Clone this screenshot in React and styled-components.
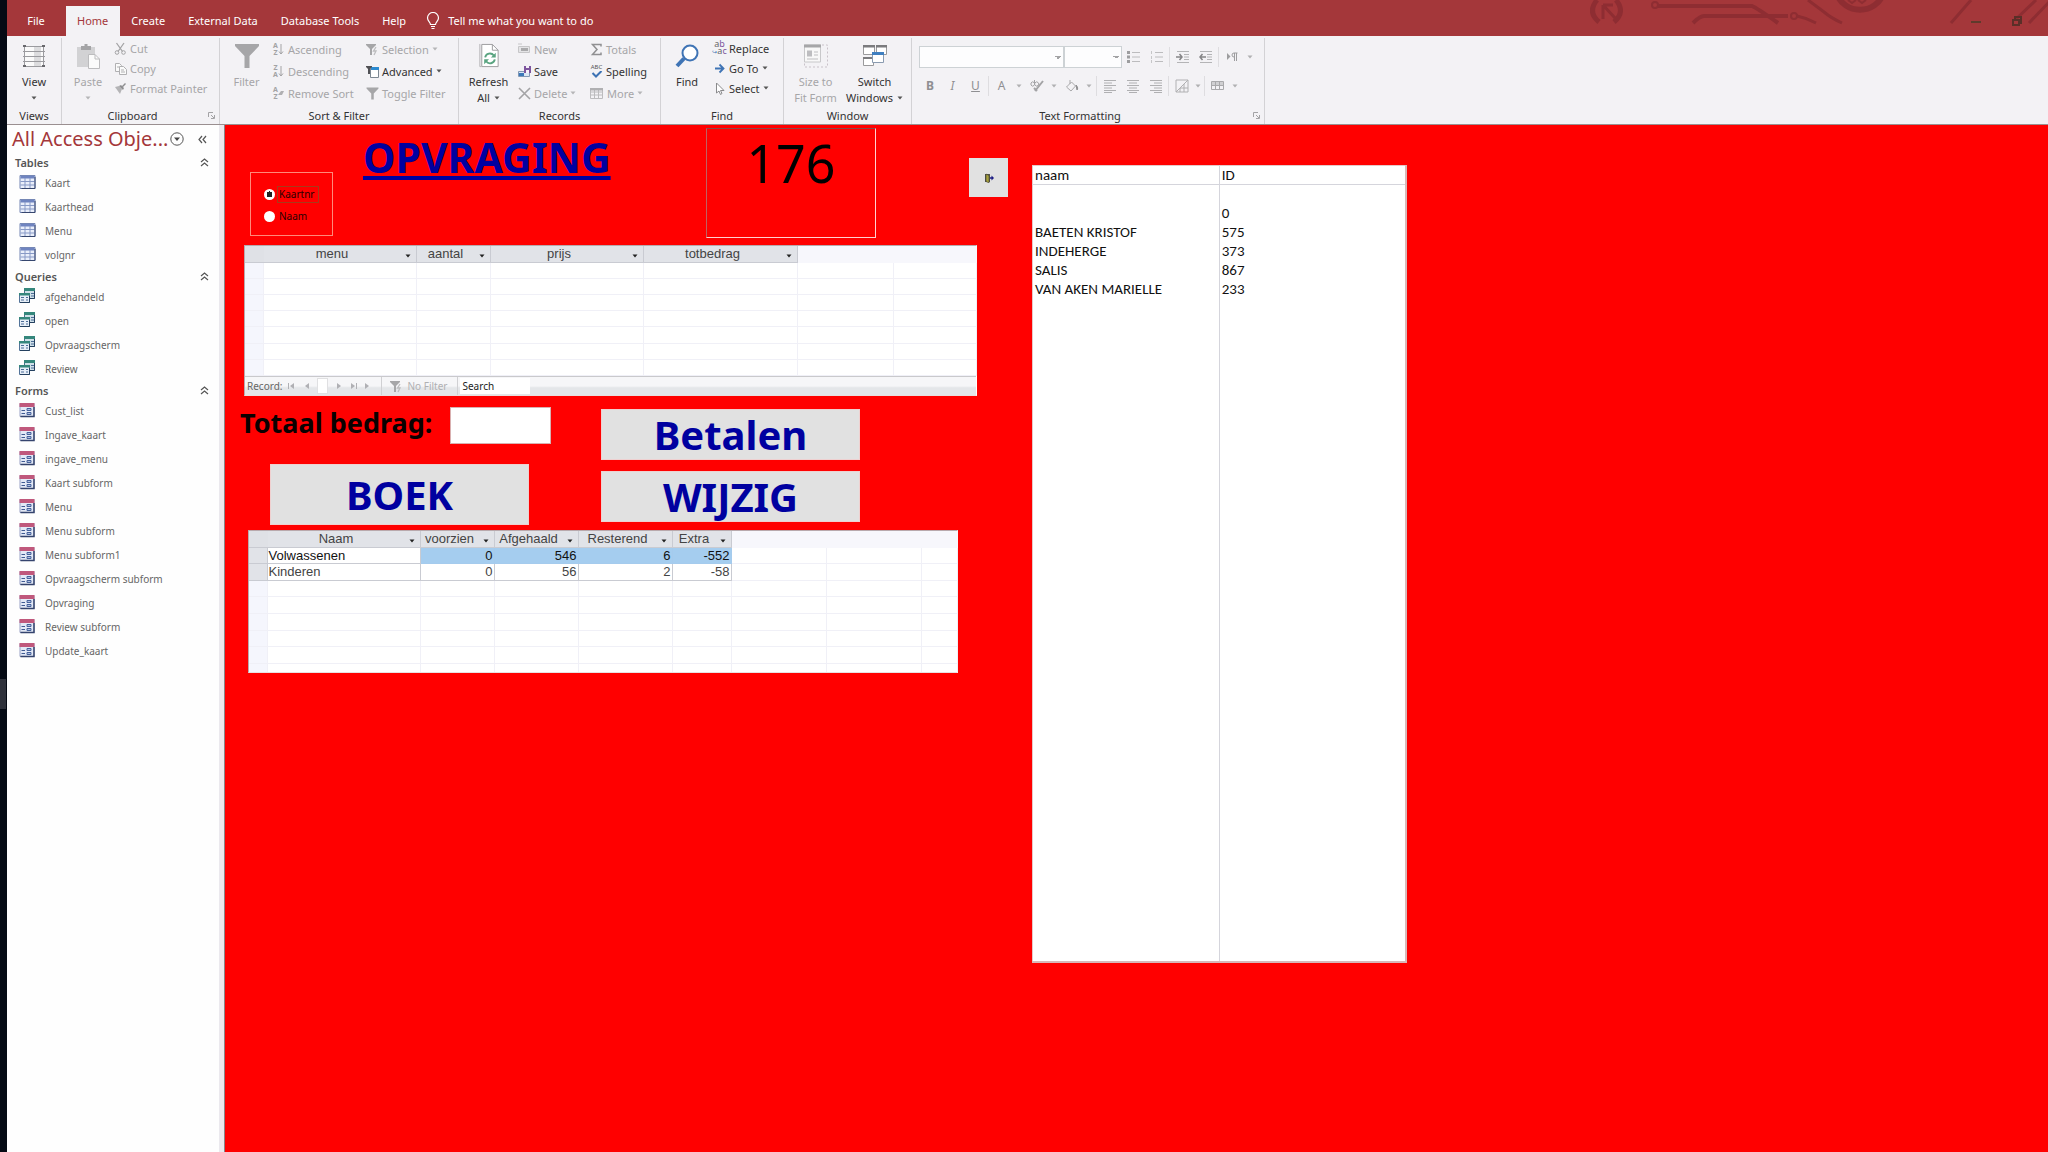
import React from "react";
import styled, { createGlobalStyle, css } from "styled-components";

const GlobalStyle = createGlobalStyle`
  * {
    box-sizing: border-box;
  }
  body {
    margin: 0;
    background: #ff0000;
    font-family: "Noto Sans", "Open Sans", sans-serif;
    font-size: 11px;
    color: #333;
  }
  button, input, select {
    font: inherit;
    color: inherit;
    margin: 0;
  }
  button {
    border: 0;
    padding: 0;
    background: none;
  }
`;

/* ---------- icons ---------- */

const Svg = ({ w = 16, h = w, vw = w, vh = h, children }) => (
  <svg
    width={w}
    height={h}
    viewBox={`0 0 ${vw} ${vh}`}
    fill="none"
    aria-hidden="true"
  >
    {children}
  </svg>
);

const Caret = ({ color = "#555" }) => (
  <Svg w={6} h={4}>
    <path d="M0.5 0.5h5L3 3.5z" fill={color} />
  </Svg>
);

const ViewIcon = () => (
  <Svg w={24}>
    <path d="M2 2h20v20H2z" fill="#fafafa" />
    <path d="M12 2h7v20h-7z" fill="#dcdcde" />
    <path d="M2.500 1v22M21.500 1v22M1 2.500h22M1 7.500h22M1 12.500h22M1 17.500h22M1 22.500h22" stroke="#9b9b9f" />
    <path d="M1 1h3v2H1zM20 1h3v2h-3zM1 21h3v2H1zM20 21h3v2h-3z" fill="#68686c" />
  </Svg>
);

const PasteIcon = () => (
  <Svg w={24} h={26}>
    <path d="M1 4h18v20H1z" fill="#d2d2d4" />
    <path d="M5 3h3.500V1h3V3H15v4H5z" fill="#a4a4a6" />
    <path d="M12.500 11.500h6.500l4.500 4.500v9.500h-11z" fill="#fbfbfb" stroke="#bcbcbe" />
    <path d="M19 11.500V16h4.500" stroke="#bcbcbe" />
  </Svg>
);

const CutIcon = () => (
  <Svg w={13}>
    <path d="M2.500 1l6 8.500M10 1L4 9.500" stroke="#a3a3a5" strokeWidth="1.300" />
    <circle cx="3" cy="10.500" r="1.800" stroke="#a3a3a5" />
    <circle cx="9.500" cy="10.500" r="1.800" stroke="#a3a3a5" />
  </Svg>
);

const CopyIcon = () => (
  <Svg w={13}>
    <path d="M1.500 1.500h4l2 2v6h-6z" fill="#fafafa" stroke="#b0b0b2" />
    <path d="M5.500 4.500h4l3 3v5h-7z" fill="#fafafa" stroke="#b0b0b2" />
    <path d="M7 8h3M7 10h4M3 5h2" stroke="#b0b0b2" />
  </Svg>
);

const PainterIcon = () => (
  <Svg w={13}>
    <path d="M1 5l4-1 3 3-2 5z" fill="#b4b4b6" />
    <path d="M5 4l2-1 3 3-1 2zM8 4l3-3 1 1-3 3z" fill="#8e8e90" />
  </Svg>
);

const FilterIcon = ({ size = 26 }) => (
  <Svg w={size} vw={26} vh={26}>
    <path d="M1 1h24v2L15.500 13v12h-5V13L1 3z" fill="#a6a6a8" />
  </Svg>
);

const SortIcon = ({ top, bottom, erase }) => (
  <SortGlyph>
    <span>
      {top}
      <br />
      {bottom}
    </span>
    <Svg w={6} h={12}>
      {erase ? (
        <path d="M0 8l3-4h3l-2 4z" fill="#b0b0b2" />
      ) : (
        <path d="M3 1v10M1 8.500l2 2.500 2-2.500" stroke="#a3a3a5" />
      )}
    </Svg>
  </SortGlyph>
);

const SelectionIcon = () => (
  <Svg w={13}>
    <path d="M0 1h10v1L6 6v6H4V6L0 2z" fill="#a6a6a8" />
    <path d="M10 4L7.500 8H10l-2 4" stroke="#bdbdbf" strokeWidth="1.300" />
  </Svg>
);

const AdvancedIcon = () => (
  <Svg w={13}>
    <path d="M4.500 3.500h8v9h-8z" fill="#fff" stroke="#7c8792" />
    <path d="M5 2h8v3H5z" fill="#2b8ad0" />
    <path d="M0 1h6v1L4 4v5H2V4L0 2z" fill="#505054" />
  </Svg>
);

const RefreshIcon = () => (
  <Svg w={22} h={27}>
    <path d="M1.500 1v23.500H3" stroke="#b3b3b5" />
    <path d="M3.500 1.500h11l6 6v17h-17z" fill="#fff" stroke="#9b9b9d" />
    <path d="M14.500 1.500v6h6" stroke="#9b9b9d" />
    <path d="M7 15a5 5 0 0 1 9-2M17 17a5 5 0 0 1-9 2" stroke="#5aa480" strokeWidth="2" />
    <path d="M18 10v5h-5zM6 22v-5h5z" fill="#5aa480" />
  </Svg>
);

const NewIcon = () => (
  <Svg w={13}>
    <path d="M0.500 3.500h11v6H.5z" fill="#e4e4e6" stroke="#c6c6c8" />
    <path d="M3 5h7v3H3z" fill="#a9a9ab" />
    <path d="M0 1h4" stroke="#c6c6c8" />
  </Svg>
);

const SaveIcon = () => (
  <Svg w={13}>
    <path d="M0.500 6.500h11v5H.5z" fill="#dbe6f3" stroke="#8198b4" />
    <path d="M1 8h5v3H1z" fill="#3c78b8" />
    <path d="M6 1h7v7H6z" fill="#7d559e" />
    <path d="M8 1h3v2H8zM8 5h3v3H8z" fill="#f4eff7" />
  </Svg>
);

const DeleteIcon = () => (
  <Svg w={13}>
    <path d="M1 1l11 11M12 1L1 12" stroke="#a3a3a5" strokeWidth="1.600" />
  </Svg>
);

const SigmaIcon = () => (
  <Svg w={13}>
    <path d="M11 3.500V1.500H2.500L7 6.500l-4.500 5H11v-2" stroke="#909092" strokeWidth="1.500" />
  </Svg>
);

const SpellingIcon = () => (
  <AbcGlyph>
    ABC
    <Svg w={12} h={7}>
      <path d="M1.500 2l3.500 3.500L10.500 0" stroke="#3c72b4" strokeWidth="2" />
    </Svg>
  </AbcGlyph>
);

const MoreIcon = () => (
  <Svg w={14} h={13}>
    <path d="M0.500 1.500h12v10H.5zM.5 5h12M.5 8h12M4.500 1.500v10M8.500 1.500v10" stroke="#bcbcbe" />
    <path d="M0 1h13v2.500H0z" fill="#b0b0b2" />
  </Svg>
);

const FindIcon = () => (
  <Svg w={25}>
    <path d="M9 15l-7 7.500" stroke="#3f74b5" strokeWidth="4" />
    <circle cx="15" cy="9.500" r="7.500" fill="#fff" stroke="#3f74b5" strokeWidth="2" />
  </Svg>
);

const ReplaceIcon = () => (
  <ReplaceGlyph>
    <span>
      a<b>b</b>
    </span>
    <span>
      <i>↪</i>a<b>c</b>
    </span>
  </ReplaceGlyph>
);

const GoToIcon = () => (
  <Svg w={13}>
    <path d="M2 6.500h8M6.500 2.500l4 4-4 4" stroke="#3f74b5" strokeWidth="1.800" />
  </Svg>
);

const PointerIcon = () => (
  <Svg w={13}>
    <path d="M3.500 1v10l2.500-2 1.500 3.500 1.500-1L7.500 8.500H11z" fill="#fff" stroke="#8a8a8c" />
  </Svg>
);

const SizeFormIcon = () => (
  <Svg w={26} h={25}>
    <path d="M1.500 1.500h16v17h-16z" fill="#f8f8f8" stroke="#c8c8ca" />
    <path d="M1 1h17v3H1z" fill="#a6a6a8" />
    <path d="M4 7h5v6H4zM4 15h11v1H4zM11 8h4v1h-4zM11 11h4v1h-4z" fill="#bdbdc0" />
    <path d="M19 1.500h5.500v22H1.500V20" stroke="#c9c2c9" strokeDasharray="2 2" />
  </Svg>
);

const SwitchIcon = () => (
  <Svg w={26} h={24}>
    <path d="M1.500 1.500h11v9h-11zM14.500 1.500h10v9h-10zM1.500 13.500h10v8h-10z" fill="#fff" stroke="#9a9a9c" />
    <path d="M1 1h12v2.500H1zM14 1h11v2.500H14zM1 13h11v2H1z" fill="#7b7b7e" />
    <path d="M10.500 9.500h11v9h-11z" fill="#fff" stroke="#8a9bb0" />
    <path d="M10 8h12v3H10z" fill="#3f7fc0" />
  </Svg>
);

const ListIcon = ({ square }) => (
  <Svg w={14}>
    <path d="M5 2.500h8M5 7h8M5 11.500h8" stroke="#bcbcbe" />
    {square ? (
      <path d="M1.500 1v3M1.500 6v3M1.500 10v3" stroke="#c6c6c8" />
    ) : (
      <path d="M0 1h3v3H0zM0 5.500h3v3H0zM0 10h3v3H0z" fill="#9d9d9f" />
    )}
  </Svg>
);

const IndentIcon = ({ back }) => (
  <Svg w={14}>
    <path d="M1 1.500h12M8 4.500h5M8 7h5M8 9.500h5M1 12.500h12" stroke="#b4b4b6" />
    <path
      d={back ? "M7 7H1M3.500 4L1 7l2.500 3" : "M0 7h6M3.500 4L6 7l-2.500 3"}
      stroke="#858587"
      strokeWidth="1.500"
    />
  </Svg>
);

const DirectionIcon = () => (
  <Svg w={12}>
    <path d="M1 2v7l3.500-3.500z" fill="#9d9d9f" />
    <path d="M8 6a2 2 0 0 1 0-4h3.500M8.500 2v8M10.500 2v8" stroke="#9d9d9f" />
  </Svg>
);

const AlignIcon = ({ align }) => {
  const x = { left: 1, center: 3, right: 5 }[align];
  return (
    <Svg w={14}>
      <path
        d={`M1 1.500h12M${x} 4h8M1 6.500h12M${x} 9h8M1 11.500h12M${x} 13.500h8`}
        stroke="#b0b0b2"
      />
    </Svg>
  );
};

const HighlightIcon = () => (
  <Svg w={14}>
    <path d="M5 12l8-10M4 9l3 3" stroke="#a3a3a5" strokeWidth="2" />
    <path d="M1 4a2 2 0 1 1 0 2zM4.500 1v5M5 4a2 2 0 1 1 0 2" stroke="#a3a3a5" />
  </Svg>
);

const BucketIcon = () => (
  <Svg w={14}>
    <path d="M1.500 8l5-5 4 4-4.500 5zM5 5V1" stroke="#a9a9ab" />
    <path d="M11 6c2 2 2 4 1 5z" fill="#8e8e90" stroke="#8e8e90" />
  </Svg>
);

const GridlineIcon = () => (
  <Svg w={14}>
    <path d="M1 13L13 1v12zM1 1h12M1 1v12M5 9v4M9 5v8M5 9h8" stroke="#b0b0b2" />
  </Svg>
);

const AltRowIcon = () => (
  <Svg w={14} h={10}>
    <path d="M1 1h12v3H1z" fill="#d0d0d2" />
    <path d="M.5 .5h12v8H.5zM.5 4.500h12M4.500 .5v8M8.500 .5v8" stroke="#a9a9ab" />
  </Svg>
);

const LauncherIcon = () => (
  <Svg w={7}>
    <path d="M.5 5V.5H5M3 3l3 3M6.500 3v3.500H3" stroke="#a3a3a5" />
  </Svg>
);

const BulbIcon = () => (
  <Svg w={14} h={18}>
    <path
      d="M4.500 12.500c0-2-3-3.500-3-6.500a5.500 5.500 0 0 1 11 0c0 3-3 4.500-3 6.500zM5 14.500h4M5.500 16.500h3"
      stroke="#fff"
      strokeWidth="1.200"
    />
  </Svg>
);

const TableIcon = () => (
  <Svg w={16} h={14}>
    <path d="M.5 .5h15v13H.5z" fill="#e9eefa" stroke="#7587b5" />
    <path d="M1 1h14v2.500H1z" fill="#6f84c0" />
    <path d="M1 6.500h14M1 10h14M5.500 3v10M10.500 3v10" stroke="#8799c6" />
    <path d="M15.500 2v11.500H2" stroke="#36466e" />
  </Svg>
);

const QueryIcon = () => (
  <Svg w={17} h={16}>
    <path d="M5.500 1.500h10v9h-10z" fill="#cfe0e8" stroke="#4b6f89" />
    <path d="M5 0h11v3H5z" fill="#35877c" />
    <path d="M12 5.500h3M12 8h3" stroke="#4d6d98" />
    <path d="M15.500 3v7.500H11" stroke="#24405f" />
    <path d="M.5 5.500h10v9H.5z" fill="#e6eef7" stroke="#53749a" />
    <path d="M0 5h11v2.500H0z" fill="#35877c" />
    <path d="M2 9.500h3M2 12h3M7 9.500h2M7 12h2" stroke="#4d6d98" />
    <path d="M10.500 8v6.500H1" stroke="#24405f" />
  </Svg>
);

const FormIcon = () => (
  <Svg w={16} h={15}>
    <path d="M.5 .5h14v13H.5z" fill="#e3e9f6" stroke="#9aa3c6" />
    <path d="M0 0h15v4H0z" fill="#c0587c" />
    <path d="M2 7.500h3.500M2 10.500h3.500" stroke="#3f5a92" />
    <path d="M7.500 5.500h4v2h-4zM7.500 9.500h4v2h-4z" fill="#b4c3e2" stroke="#46629c" />
    <path d="M14.500 4v9.500H1" stroke="#35446e" strokeWidth="1.500" />
  </Svg>
);

const DoubleChevron = ({ left }) => (
  <Svg w={9}>
    <path
      d={left ? "M4 1L1 4.500 4 8M8 1L5 4.500 8 8" : "M1 4l3.500-3L8 4M1 8l3.500-3L8 8"}
      stroke="#555"
      strokeWidth="1.200"
    />
  </Svg>
);

const NavMenuIcon = () => (
  <Svg w={14}>
    <circle cx="7" cy="7" r="6.200" stroke="#555" />
    <path d="M4 5.500h6L7 9z" fill="#444" />
  </Svg>
);

const ExitIcon = () => (
  <Svg w={10}>
    <path d="M1 1h5v8H1z" fill="#55554a" />
    <path d="M2 1l3 1.500V10L2 8.500z" fill="#a8a13c" stroke="#333" strokeWidth=".5" />
    <path d="M6 5h2" stroke="#1b1b82" strokeWidth="1.500" />
    <path d="M7.500 2.500v5L10 5z" fill="#1b1b82" />
  </Svg>
);

const TitleArt = () => (
  <Svg w={458} h={25}>
    <g stroke="#8e2d32" strokeWidth="4">
      <path d="M7 0q-10 12 2 22M26 0q10 12-2 22" strokeWidth="5" />
      <path d="M13 5v14M13 5l12 13M13 5h10" strokeWidth="3" />
      <circle cx="65" cy="5" r="3" strokeWidth="2" />
      <path d="M68 6h94q5 2 26 17" />
      <path d="M103 23q7-7 11-7h84" />
      <circle cx="204" cy="16" r="3" strokeWidth="2" />
      <path d="M207 16q10 2 19 7M218 0l16 12q7 6 18 11" strokeWidth="3" />
      <path d="M247-6a24 22 0 0 0 46 0" strokeWidth="6" />
      <path d="M258 0l4 3 4-3M268 0l4 3 4-3" strokeWidth="2" />
      <path d="M381 0l-20 23M446 0l-21 20M461 0l-22 23" strokeWidth="3" />
    </g>
  </Svg>
);

/* ---------- shell ---------- */

const Shell = styled.div`
  display: flex;
  min-height: 100vh;
`;

const DesktopEdge = styled.div`
  flex: 0 0 7px;
  display: flex;
  flex-direction: column;
  justify-content: center;
  background: #050a14;

  &::after {
    content: "";
    height: 30px;
    margin: 235px 1px 0 0;
    background: #2f323b;
  }
`;

const Window = styled.div`
  flex: 1;
  min-width: 0;
  display: flex;
  flex-direction: column;
`;

const TitleBar = styled.header`
  position: relative;
  display: flex;
  align-items: flex-end;
  height: 36px;
  padding-left: 6px;
  background: #a4373a;
  color: #fff;

  > svg {
    position: absolute;
    top: 0;
    right: 0;
  }
`;

const Tab = styled.button`
  height: 30px;
  padding: 0 12px 0 11px;
  line-height: 30px;
  white-space: nowrap;
  ${(p) =>
    p.$active &&
    css`
      background: #f3f2f5;
      color: #a4373a;
    `}
`;

const FileTab = styled(Tab)`
  width: 44px;
  margin-right: 9px;
  padding: 0 0 0 2px;
`;

const TellMe = styled(Tab)`
  display: flex;
  align-items: center;
  gap: 8px;
  padding-left: 8px;
`;

const WindowControls = styled.div`
  position: relative;
  display: flex;
  align-items: center;
  gap: 31px;
  height: 30px;
  margin-left: auto;
  padding-right: 26px;

  button {
    display: flex;
  }
`;

/* ---------- ribbon ---------- */

const Ribbon = styled.div`
  display: flex;
  height: 89px;
  padding-top: 2px;
  background: #f3f2f5;
  border-bottom: 1px solid #9a8f90;
`;

const Group = styled.section`
  position: relative;
  display: flex;
  flex-direction: column;
  width: ${(p) => p.$width}px;
  border-right: 1px solid #d3d2d5;
  white-space: nowrap;
`;

const GroupBody = styled.div`
  flex: 1;
  display: flex;
  align-items: flex-start;
  justify-content: ${(p) => p.$justify || "flex-start"};
`;

const GroupTitle = styled.div`
  height: 16px;
  line-height: 16px;
  padding-right: ${(p) => p.$inset || 0}px;
  text-align: center;
`;

const Launcher = styled.button`
  position: absolute;
  right: 4px;
  bottom: 5px;
  display: flex;
`;

const LargeButton = styled.button`
  display: flex;
  flex-direction: column;
  align-items: center;
  width: ${(p) => p.$width || 54}px;
  padding-top: 5px;
  line-height: 16px;
  color: #333;

  > svg:first-child {
    height: 26px;
    margin-bottom: 5px;
  }
  span {
    display: flex;
    align-items: center;
    gap: 4px;
    height: 16px;
  }
  &:disabled {
    color: #a6a6a8;
  }
`;

const SmallColumn = styled.div`
  display: flex;
  flex-direction: column;
  width: ${(p) => p.$width}px;
`;

const SmallButton = styled.button`
  display: flex;
  align-items: center;
  gap: 3px;
  height: ${(p) => (p.$loose ? 22 : 20)}px;
  color: #333;

  &:disabled {
    color: #a6a6a8;
  }
`;

const SortGlyph = styled.span`
  display: flex;
  align-items: center;
  width: 12px;
  font-size: 7px;
  font-weight: 700;
  line-height: 7px;
  color: #a3a3a5;
`;

const AbcGlyph = styled.span`
  display: flex;
  flex-direction: column;
  align-items: center;
  width: 13px;
  font-size: 6px;
  line-height: 7px;
  color: #555;
`;

const ReplaceGlyph = styled.span`
  display: flex;
  flex-direction: column;
  align-items: center;
  width: 13px;
  font-size: 9px;
  line-height: 7px;
  color: #666;

  b {
    color: #7d559e;
    font-weight: 400;
  }
  i {
    color: #3f74b5;
    font-size: 6px;
    font-style: normal;
  }
`;

const FormatBody = styled.div`
  flex: 1;
  padding: 8px 0 0 7px;
`;

const FormatRow = styled.div`
  display: flex;
  align-items: center;
  height: ${(p) => p.$height}px;
`;

const FontSelect = styled.select`
  width: ${(p) => p.$width}px;
  height: 22px;
  appearance: none;
  border: 1px solid #cdd2d5;
  border-radius: 0;
  background-color: #fdfdfe;
  background-image: linear-gradient(45deg, transparent 50%, #a3a3a5 50%),
    linear-gradient(135deg, #a3a3a5 50%, transparent 50%);
  background-position: right 5px center, right 2px center;
  background-size: 3px 3px;
  background-repeat: no-repeat;
  opacity: 1;
`;

const ToolButton = styled.button`
  display: flex;
  align-items: center;
  justify-content: center;
  width: ${(p) => p.$width || 23}px;
  height: 20px;
  font-size: 12px;
  color: #8f8f92;
`;

const ToolSeparator = styled.span`
  width: 1px;
  height: 20px;
  margin: 0 1px;
  background: #dedde0;
`;

const small = (icon, label, options = {}) => ({ icon, label, ...options });

const Small = ({ items, width, loose }) => (
  <SmallColumn $width={width}>
    {items.map(({ icon, label, off, menu }) => (
      <SmallButton key={label} disabled={off} $loose={loose}>
        {icon}
        {label}
        {menu && <Caret color={off ? "#b5b5b7" : "#555"} />}
      </SmallButton>
    ))}
  </SmallColumn>
);

const RibbonBar = () => (
  <Ribbon>
    <Group $width={55}>
      <GroupBody>
        <LargeButton>
          <ViewIcon />
          <span>View</span>
          <span>
            <Caret />
          </span>
        </LargeButton>
      </GroupBody>
      <GroupTitle>Views</GroupTitle>
    </Group>

    <Group $width={158}>
      <GroupBody>
        <LargeButton disabled $width={52}>
          <PasteIcon />
          <span>Paste</span>
          <span>
            <Caret color="#b5b5b7" />
          </span>
        </LargeButton>
        <Small
          width={100}
          items={[
            small(<CutIcon />, "Cut", { off: true }),
            small(<CopyIcon />, "Copy", { off: true }),
            small(<PainterIcon />, "Format Painter", { off: true }),
          ]}
        />
      </GroupBody>
      <GroupTitle $inset={16}>Clipboard</GroupTitle>
      <Launcher aria-label="Clipboard options">
        <LauncherIcon />
      </Launcher>
    </Group>

    <Group $width={239}>
      <GroupBody>
        <LargeButton disabled $width={53}>
          <FilterIcon />
          <span>Filter</span>
        </LargeButton>
        <Small
          loose
          width={93}
          items={[
            small(<SortIcon top="A" bottom="Z" />, "Ascending", { off: true }),
            small(<SortIcon top="Z" bottom="A" />, "Descending", { off: true }),
            small(<SortIcon top="A" bottom="Z" erase />, "Remove Sort", { off: true }),
          ]}
        />
        <Small
          loose
          width={92}
          items={[
            small(<SelectionIcon />, "Selection", { off: true, menu: true }),
            small(<AdvancedIcon />, "Advanced", { menu: true }),
            small(<FilterIcon size={13} />, "Toggle Filter", { off: true }),
          ]}
        />
      </GroupBody>
      <GroupTitle>Sort &amp; Filter</GroupTitle>
    </Group>

    <Group $width={202}>
      <GroupBody>
        <LargeButton $width={59}>
          <RefreshIcon />
          <span>Refresh</span>
          <span>
            All <Caret />
          </span>
        </LargeButton>
        <Small
          loose
          width={72}
          items={[
            small(<NewIcon />, "New", { off: true }),
            small(<SaveIcon />, "Save"),
            small(<DeleteIcon />, "Delete", { off: true, menu: true }),
          ]}
        />
        <Small
          loose
          width={66}
          items={[
            small(<SigmaIcon />, "Totals", { off: true }),
            small(<SpellingIcon />, "Spelling"),
            small(<MoreIcon />, "More", { off: true, menu: true }),
          ]}
        />
      </GroupBody>
      <GroupTitle>Records</GroupTitle>
    </Group>

    <Group $width={123}>
      <GroupBody>
        <LargeButton $width={52}>
          <FindIcon />
          <span>Find</span>
        </LargeButton>
        <Small
          width={66}
          items={[
            small(<ReplaceIcon />, "Replace"),
            small(<GoToIcon />, "Go To", { menu: true }),
            small(<PointerIcon />, "Select", { menu: true }),
          ]}
        />
      </GroupBody>
      <GroupTitle>Find</GroupTitle>
    </Group>

    <Group $width={128}>
      <GroupBody $justify="center">
        <LargeButton disabled>
          <SizeFormIcon />
          <span>Size to</span>
          <span>Fit Form</span>
        </LargeButton>
        <LargeButton $width={64}>
          <SwitchIcon />
          <span>Switch</span>
          <span>
            Windows <Caret />
          </span>
        </LargeButton>
      </GroupBody>
      <GroupTitle>Window</GroupTitle>
    </Group>

    <Group $width={353}>
      <FormatBody>
        <FormatRow $height={22}>
          <FontSelect $width={145} aria-label="Font" disabled />
          <FontSelect $width={58} aria-label="Font size" disabled />
          <ToolButton aria-label="Bullets"><ListIcon /></ToolButton>
          <ToolButton aria-label="Numbering"><ListIcon square /></ToolButton>
          <ToolSeparator />
          <ToolButton aria-label="Increase indent"><IndentIcon /></ToolButton>
          <ToolButton aria-label="Decrease indent"><IndentIcon back /></ToolButton>
          <ToolSeparator />
          <ToolButton aria-label="Text direction"><DirectionIcon /></ToolButton>
          <ToolButton $width={13} aria-label="Direction menu"><Caret color="#b0b0b2" /></ToolButton>
        </FormatRow>
        <FormatRow $height={35}>
          <ToolButton $width={22}><b>B</b></ToolButton>
          <ToolButton><i>I</i></ToolButton>
          <ToolButton><u>U</u></ToolButton>
          <ToolSeparator />
          <ToolButton>A</ToolButton>
          <ToolButton $width={12} aria-label="Font colours"><Caret color="#b0b0b2" /></ToolButton>
          <ToolButton aria-label="Highlight"><HighlightIcon /></ToolButton>
          <ToolButton $width={12} aria-label="Highlight colours"><Caret color="#b0b0b2" /></ToolButton>
          <ToolButton aria-label="Fill"><BucketIcon /></ToolButton>
          <ToolButton $width={12} aria-label="Fill colours"><Caret color="#b0b0b2" /></ToolButton>
          <ToolSeparator />
          <ToolButton aria-label="Align left"><AlignIcon align="left" /></ToolButton>
          <ToolButton aria-label="Center"><AlignIcon align="center" /></ToolButton>
          <ToolButton aria-label="Align right"><AlignIcon align="right" /></ToolButton>
          <ToolSeparator />
          <ToolButton aria-label="Gridlines"><GridlineIcon /></ToolButton>
          <ToolButton $width={10} aria-label="Gridline menu"><Caret color="#b0b0b2" /></ToolButton>
          <ToolSeparator />
          <ToolButton aria-label="Alternate row colour"><AltRowIcon /></ToolButton>
          <ToolButton $width={12} aria-label="Row colour menu"><Caret color="#b0b0b2" /></ToolButton>
        </FormatRow>
      </FormatBody>
      <GroupTitle $inset={16}>Text Formatting</GroupTitle>
      <Launcher aria-label="Text formatting options">
        <LauncherIcon />
      </Launcher>
    </Group>
  </Ribbon>
);

/* ---------- navigation pane ---------- */

const Workspace = styled.div`
  flex: 1;
  display: flex;
`;

const NavPane = styled.nav`
  flex: 0 0 218px;
  background: #fefefe;
  border-right: 1px solid #8a8488;
  box-shadow: inset -5px 0 0 #ebe9ee;
`;

const NavTitle = styled.div`
  display: flex;
  align-items: center;
  height: 28px;
  padding: 0 17px 0 5px;

  h2 {
    margin: 0 auto 0 0;
    font-size: 20px;
    line-height: 28px;
    font-weight: 400;
    color: #a4373a;
  }
  button {
    display: flex;
  }
  button + button {
    margin-left: 14px;
  }
`;

const NavHeading = styled.button`
  display: flex;
  align-items: center;
  justify-content: space-between;
  width: 100%;
  height: 18px;
  padding: 0 15px 0 8px;
  font-size: 11px;
  font-weight: 600;
  color: #555;
`;

const NavList = styled.ul`
  margin: 0;
  padding: 0;
  list-style: none;
`;

const NavLink = styled.a`
  display: flex;
  align-items: center;
  height: 24px;
  padding-left: 12px;
  font-size: 10px;
  color: #666;
  text-decoration: none;

  svg {
    flex: 0 0 17px;
    margin: 0 9px 2px 0;
  }
`;

const navGroups = [
  {
    title: "Tables",
    icon: TableIcon,
    items: ["Kaart", "Kaarthead", "Menu", "volgnr"],
  },
  {
    title: "Queries",
    icon: QueryIcon,
    items: ["afgehandeld", "open", "Opvraagscherm", "Review"],
  },
  {
    title: "Forms",
    icon: FormIcon,
    items: [
      "Cust_list",
      "Ingave_kaart",
      "ingave_menu",
      "Kaart subform",
      "Menu",
      "Menu subform",
      "Menu subform1",
      "Opvraagscherm subform",
      "Opvraging",
      "Review subform",
      "Update_kaart",
    ],
  },
];

const Navigation = () => (
  <NavPane>
    <NavTitle>
      <h2>All Access Obje...</h2>
      <button aria-label="Choose category">
        <NavMenuIcon />
      </button>
      <button aria-label="Collapse pane">
        <DoubleChevron left />
      </button>
    </NavTitle>
    {navGroups.map(({ title, icon: Icon, items }) => (
      <React.Fragment key={title}>
        <NavHeading>
          {title}
          <DoubleChevron />
        </NavHeading>
        <NavList>
          {items.map((item) => (
            <li key={item}>
              <NavLink href="#">
                <Icon />
                {item}
              </NavLink>
            </li>
          ))}
        </NavList>
      </React.Fragment>
    ))}
  </NavPane>
);

/* ---------- form ---------- */

const FormView = styled.main`
  flex: 1;
  display: flex;
  align-items: flex-start;
  gap: 24px;
  padding-top: 3px;
  background: #ff0000;
`;

const FormColumn = styled.div`
  flex: 0 0 783px;
`;

const FormHeader = styled.div`
  display: flex;
  align-items: flex-start;
  height: 117px;
  padding-left: 25px;
`;

const SearchBy = styled.fieldset`
  width: 83px;
  height: 64px;
  margin: 44px 0 0;
  padding: 10px 0 0 13px;
  border: 1px solid #ff8a7a;

  label {
    display: flex;
    align-items: center;
    gap: 2px;
    height: 22px;
    font-size: 10px;
    color: #2a0000;
  }
  span {
    padding: 0 4px 0 1px;
    line-height: 15px;
    border: 1px solid transparent;
  }
  input:checked + span {
    border-color: #a83a1a;
  }
  input {
    appearance: none;
    width: 11px;
    height: 11px;
    border-radius: 50%;
    background: #fff;
  }
  input:checked {
    background: radial-gradient(circle, #222 0 3px, #fff 3px);
  }
`;

const FormTitle = styled.h1`
  width: 248px;
  margin: 5px 95px 0 30px;
  font-size: 41px;
  line-height: 48px;
  font-weight: 700;
  color: #0000a0;
  text-decoration: underline;
  text-decoration-thickness: 4px;
  text-underline-offset: 3px;
  text-decoration-skip-ink: none;
`;

const CardNumber = styled.input`
  width: 170px;
  height: 110px;
  padding: 0 0 42px;
  border: 1px solid #ffd0d0;
  border-top-color: #8a4a4a;
  border-left-color: #c06060;
  border-radius: 0;
  background: transparent;
  font-size: 52px;
  color: #000;
  text-align: center;
`;

const ExitButton = styled.button`
  display: flex;
  align-items: center;
  justify-content: center;
  width: 39px;
  height: 39px;
  margin: 30px 0 0 auto;
  background: #e1e1e1;
`;

const Datasheet = styled.div`
  width: ${(p) => p.$width}px;
  margin-left: ${(p) => p.$indent}px;
  border: 1px solid #b9a9ad;
  border-right-color: #fff;
  border-bottom-color: #e8e0e0;
  background: #fff;
`;

const Sheet = styled.table`
  width: 100%;
  height: ${(p) => p.$height}px;
  table-layout: fixed;
  border-collapse: collapse;
  font-family: "Liberation Sans", Arial, sans-serif;
  font-size: 13px;
  line-height: 15px;
  color: #444;

  th,
  td {
    height: 16px;
    padding: 0 1px;
    border: 0 solid #f0f0f7;
    border-width: 0 1px 1px 0;
    font-weight: 400;
    text-align: right;
    overflow: hidden;
    white-space: nowrap;
  }
  thead th {
    padding: 0;
    background: #e1e3e8;
    border-color: #c9cbd2;
  }
  thead td {
    background: #f7f7fc;
    border-color: #f7f7fc;
  }
  th:first-child {
    background: #f5f6fd;
  }
  thead th:first-child {
    background: #dfe1e6;
    border-right-color: #dfe1e6;
  }
  td:nth-child(2) {
    text-align: left;
  }
`;

const HeadCell = styled.div`
  display: flex;
  align-items: center;
  height: 15px;

  span {
    flex: 1;
    text-align: center;
  }
  button {
    display: flex;
    justify-content: center;
    width: 15px;
    padding-top: 4px;
  }
`;

const DataRow = styled.tr`
  td {
    border-color: ${(p) => (p.$selected ? "#a5cbed" : "#c9cbd2")};
    background: ${(p) => (p.$selected ? "#a5cdef" : "#fff")};
    color: ${(p) => (p.$selected ? "#111" : "#444")};
  }
  && th {
    background: #e1e3e8;
    border-color: #c9cbd2;
  }
  && td:nth-child(2) {
    background: #fff;
    border-color: #c9cbd2;
  }
  && td.blank {
    background: #fff;
    border-color: #f0f0f7;
  }
`;

const TailRow = styled.tr`
  && th,
  && td {
    height: 8px;
    border-bottom: 0;
  }
`;

const SheetHead = ({ columns, blanks }) => (
  <>
    <colgroup>
      <col style={{ width: 18 }} />
      {columns.map((c) => (
        <col key={c.name} style={{ width: c.width }} />
      ))}
      {blanks.map((w, i) => (
        <col key={i} style={{ width: w }} />
      ))}
    </colgroup>
    <thead>
      <tr>
        <th />
        {columns.map((c) => (
          <th key={c.name}>
            <HeadCell>
              <span>{c.name}</span>
              <button aria-label={`Sort ${c.name}`}>
                <Caret color="#222" />
              </button>
            </HeadCell>
          </th>
        ))}
        {blanks.map((w, i) => (
          <td key={i} />
        ))}
      </tr>
    </thead>
  </>
);

const EmptyRows = ({ count, cells }) =>
  Array.from({ length: count }, (_, r) => (
    <tr key={r}>
      <th />
      {Array.from({ length: cells }, (_, c) => (
        <td key={c} />
      ))}
    </tr>
  ));

const RecordBar = styled.div`
  display: flex;
  align-items: center;
  height: 19px;
  padding-left: 2px;
  border-top: 1px solid #c9c9cc;
  background: linear-gradient(#f6f6f8 0 50%, #e4e6e9 60%);
  font-size: 10px;
  color: #666;
`;

const RecordSteps = styled.div`
  display: flex;
  align-items: center;
  justify-content: space-between;
  width: 93px;
  margin-left: 6px;
  padding-right: 10px;

  button {
    display: flex;
  }
  input {
    width: 11px;
    height: 16px;
    padding: 0;
    border: 1px solid #e0e0e2;
    background: #fff;
  }
`;

const NoFilter = styled.button`
  display: flex;
  align-items: center;
  gap: 4px;
  width: 77px;
  height: 18px;
  padding-left: 8px;
  border: solid #d0d0d3;
  border-width: 0 1px;
  color: #b0b0b2;
`;

const RecordSearch = styled.input`
  width: 70px;
  height: 16px;
  margin-left: 2px;
  padding: 0 2px;
  border: 0;
  background: #fff;
  color: #222;

  &::placeholder {
    color: #222;
    opacity: 1;
  }
`;

const Step = ({ back, bar, label }) => (
  <button aria-label={label}>
    <Svg w={8}>
      <path d={back ? "M6 1v6L2 4z" : "M2 1v6l4-3z"} fill="#b0b0b4" />
      {bar && <path d={back ? "M.5 1v6" : "M7.500 1v6"} stroke="#b0b0b4" />}
    </Svg>
  </button>
);

const Actions = styled.div`
  display: grid;
  grid-template-columns: 361px 259px;
  height: 134px;
  padding: 11px 0 0 15px;
`;

const ActionColumn = styled.div`
  display: flex;
  flex-direction: column;
  align-items: flex-start;
  gap: 11px;
  padding-top: ${(p) => p.$top || 0}px;
`;

const TotalRow = styled.label`
  display: flex;
  justify-content: space-between;
  width: 311px;
  height: 46px;
  font-size: 27px;
  line-height: 32px;
  font-weight: 700;
  color: #0a0000;
  white-space: nowrap;

  input {
    width: 101px;
    height: 37px;
    border: 1px solid #d9b0b0;
    background: #fff;
  }
`;

const ActionButton = styled.button`
  width: 259px;
  height: ${(p) => p.$height || 51}px;
  margin-left: ${(p) => p.$indent || 0}px;
  background: #e1e1e1;
  border: 1px solid #efd0d0;
  font-size: 40px;
  line-height: 48px;
  font-weight: 700;
  color: #0000a0;
`;

const CustomerList = styled.table`
  flex: 0 0 375px;
  width: 375px;
  height: 798px;
  margin-top: 37px;
  table-layout: fixed;
  border-collapse: collapse;
  border: 1px solid #e6c8c8;
  border-right: 2px solid #d8b8b8;
  border-bottom: 2px solid #d8b8b8;
  background: #fff;
  font-family: Carlito, Lato, sans-serif;
  font-size: 15px;
  line-height: 17px;
  color: #111;

  th,
  td {
    height: 19px;
    padding: 1px 2px 0;
    text-align: left;
    font-weight: 400;
    border-right: 1px solid #d5d5dc;
  }
  th {
    border-bottom: 1px solid #d5d5dc;
  }
  tr:last-child td {
    height: auto;
  }
`;

const menuColumns = [
  { name: "menu", width: 153 },
  { name: "aantal", width: 74 },
  { name: "prijs", width: 153 },
  { name: "totbedrag", width: 154 },
];

const countColumns = [
  { name: "Naam", width: 153 },
  { name: "voorzien", width: 74 },
  { name: "Afgehaald", width: 84 },
  { name: "Resterend", width: 94 },
  { name: "Extra", width: 59 },
];

const counts = [
  ["Volwassenen", 0, 546, 6, -552],
  ["Kinderen", 0, 56, 2, -58],
];

const customers = [
  ["", ""],
  ["", 0],
  ["BAETEN KRISTOF", 575],
  ["INDEHERGE", 373],
  ["SALIS", 867],
  ["VAN AKEN MARIELLE", 233],
];

const MenuSheet = () => (
  <Datasheet $width={733} $indent={19}>
    <Sheet $height={130}>
      <SheetHead columns={menuColumns} blanks={[96, 83]} />
      <tbody>
        <EmptyRows count={7} cells={6} />
      </tbody>
    </Sheet>
    <RecordBar>
      Record:
      <RecordSteps>
        <Step back bar label="First record" />
        <Step back label="Previous record" />
        <input aria-label="Current record" />
        <Step label="Next record" />
        <Step bar label="Last record" />
        <Step label="New record" />
      </RecordSteps>
      <NoFilter disabled>
        <SelectionIcon />
        No Filter
      </NoFilter>
      <RecordSearch placeholder="Search" aria-label="Search" />
    </RecordBar>
  </Datasheet>
);

const CountSheet = () => (
  <Datasheet $width={710} $indent={23}>
    <Sheet $height={141}>
      <SheetHead columns={countColumns} blanks={[95, 95, 36]} />
      <tbody>
        {counts.map((row, r) => (
          <DataRow key={row[0]} $selected={r === 0}>
            <th />
            {row.map((value, c) => (
              <td key={c}>{value}</td>
            ))}
            <td className="blank" />
            <td className="blank" />
            <td className="blank" />
          </DataRow>
        ))}
        <EmptyRows count={5} cells={8} />
        <TailRow>
          <th />
          {Array.from({ length: 8 }, (_, c) => (
            <td key={c} />
          ))}
        </TailRow>
      </tbody>
    </Sheet>
  </Datasheet>
);

const App = () => (
  <>
    <GlobalStyle />
    <Shell>
      <DesktopEdge />
      <Window>
        <TitleBar>
          <TitleArt />
          <FileTab>File</FileTab>
          <Tab $active>Home</Tab>
          <Tab>Create</Tab>
          <Tab>External Data</Tab>
          <Tab>Database Tools</Tab>
          <Tab>Help</Tab>
          <TellMe>
            <BulbIcon />
            Tell me what you want to do
          </TellMe>
          <WindowControls>
            <button aria-label="Minimize">
              <Svg w={10}>
                <path d="M0 6h10" stroke="#5f3a2c" strokeWidth="2" />
              </Svg>
            </button>
            <button aria-label="Restore">
              <Svg w={10}>
                <path d="M1 4h6v5H1zM3 3V1h6v6H8" stroke="#5a2f28" strokeWidth="2" />
              </Svg>
            </button>
          </WindowControls>
        </TitleBar>
        <RibbonBar />
        <Workspace>
          <Navigation />
          <FormView>
            <FormColumn>
              <FormHeader>
                <SearchBy aria-label="Search by">
                  <label>
                    <input type="radio" name="by" defaultChecked />
                    <span>Kaartnr</span>
                  </label>
                  <label>
                    <input type="radio" name="by" />
                    <span>Naam</span>
                  </label>
                </SearchBy>
                <FormTitle>OPVRAGING</FormTitle>
                <CardNumber defaultValue="176" aria-label="Kaartnr" />
                <ExitButton aria-label="Close form">
                  <ExitIcon />
                </ExitButton>
              </FormHeader>
              <MenuSheet />
              <Actions>
                <ActionColumn>
                  <TotalRow>
                    Totaal bedrag:
                    <input />
                  </TotalRow>
                  <ActionButton $height={61} $indent={30}>
                    BOEK
                  </ActionButton>
                </ActionColumn>
                <ActionColumn $top={2}>
                  <ActionButton>Betalen</ActionButton>
                  <ActionButton>WIJZIG</ActionButton>
                </ActionColumn>
              </Actions>
              <CountSheet />
            </FormColumn>
            <CustomerList>
              <thead>
                <tr>
                  <th>naam</th>
                  <th>ID</th>
                </tr>
              </thead>
              <tbody>
                {customers.map(([name, id], i) => (
                  <tr key={i}>
                    <td>{name}</td>
                    <td>{id}</td>
                  </tr>
                ))}
                <tr>
                  <td />
                  <td />
                </tr>
              </tbody>
            </CustomerList>
          </FormView>
        </Workspace>
      </Window>
    </Shell>
  </>
);

export default App;
